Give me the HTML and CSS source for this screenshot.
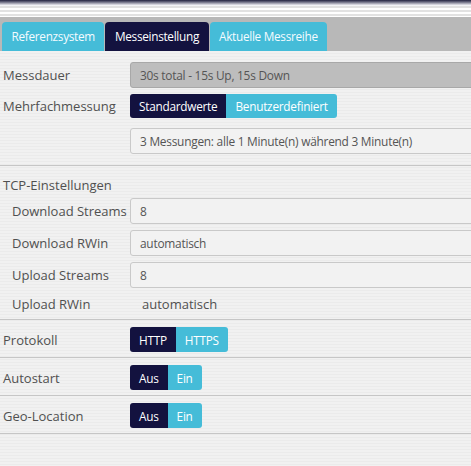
FILE: index.html
```html
<!DOCTYPE html>
<html lang="de">
<head>
<meta charset="utf-8">
<link rel="stylesheet" href="styles.css">
</head>
<body>
<div class="topband"></div>
<div class="tabbar">
  <div class="tab">Referenzsystem</div>
  <div class="tab active">Messeinstellung</div>
  <div class="tab">Aktuelle Messreihe</div>
</div>
<div class="form">
  <div class="row r26 mb6">
    <div class="label">Messdauer</div>
    <div class="field disabled">30s total - 15s Up, 15s Down</div>
  </div>
  <div class="row r24 mb10">
    <div class="label">Mehrfachmessung</div>
    <div class="btngroup">
      <span class="btn dark">Standardwerte</span><span class="btn light">Benutzerdefiniert</span>
    </div>
  </div>
  <div class="row r26">
    <div class="label"></div>
    <div class="field">3 Messungen: alle 1 Minute(n) während 3 Minute(n)</div>
  </div>
  <div class="hr hr-first"></div>
  <div class="heading">TCP-Einstellungen</div>
  <div class="row r26 mb6">
    <div class="label sub">Download Streams</div>
    <div class="field">8</div>
  </div>
  <div class="row r26 mb6">
    <div class="label sub">Download RWin</div>
    <div class="field">automatisch</div>
  </div>
  <div class="row r26 mb6">
    <div class="label sub">Upload Streams</div>
    <div class="field">8</div>
  </div>
  <div class="row r20">
    <div class="label sub">Upload RWin</div>
    <div class="static">automatisch</div>
  </div>
  <div class="hr hr-rwin"></div>
  <div class="section">
    <div class="row r25">
      <div class="label">Protokoll</div>
      <div class="btngroup">
        <span class="btn dark">HTTP</span><span class="btn light">HTTPS</span>
      </div>
    </div>
  </div>
  <div class="hr"></div>
  <div class="section">
    <div class="row r25">
      <div class="label">Autostart</div>
      <div class="btngroup">
        <span class="btn dark">Aus</span><span class="btn light">Ein</span>
      </div>
    </div>
  </div>
  <div class="hr"></div>
  <div class="section">
    <div class="row r25">
      <div class="label">Geo-Location</div>
      <div class="btngroup">
        <span class="btn dark">Aus</span><span class="btn light">Ein</span>
      </div>
    </div>
  </div>
  <div class="hr"></div>
</div>
</body>
</html>
```

FILE: styles.css
```css
html, body {
  margin: 0;
  padding: 0;
  overflow: hidden;
}
body {
  width: 471px;
  height: 466px;
  font-family: "Open Sans", "Noto Sans", sans-serif;
  font-size: 11.9px;
  letter-spacing: -0.25px;
  color: #505050;
  background-color: #efefef;
  background-image: repeating-linear-gradient(to bottom, #f1f1f1 0, #f1f1f1 2px, #ebebeb 2px, #ebebeb 3px);
}
.topband {
  height: 17px;
  background:
    linear-gradient(to bottom, #23233f 0, #6a6a80 2px, #e8e8ee 5px, rgba(255,255,255,0) 6px),
    repeating-linear-gradient(to bottom, #ffffff 0, #ffffff 2px, #e2e2e2 2px, #e2e2e2 4px),
    #ffffff;
}
.tabbar {
  height: 30px;
  padding: 4px 0 0 2px;
  background: #b8b8b8;
  display: flex;
  align-items: flex-end;
}
.tab {
  height: 29px;
  line-height: 29px;
  padding: 0 9.5px;
  margin-right: 1px;
  background: #45bcd8;
  color: #f4fbff;
  border-radius: 4px 4px 0 0;
  font-size: 11.8px;
  letter-spacing: -0.3px;
}
.tab.active {
  background: #13123f;
  color: #ffffff;
}
.form {
  padding-top: 11px;
}
.row {
  display: flex;
  align-items: center;
}
.r26 { height: 26px; }
.r24 { height: 24px; }
.r25 { height: 25px; }
.r20 { height: 20px; }
.mb6 { margin-bottom: 6px; }
.mb10 { margin-bottom: 10px; }
.label {
  width: 127px;
  padding-left: 3px;
  flex: none;
  font-size: 13px;
  letter-spacing: 0;
}
.label.sub {
  width: 118px;
  padding-left: 12px;
}
.field {
  flex: 1;
  height: 24px;
  line-height: 24px;
  margin-right: -6px;
  padding: 0 9px;
  border: 1px solid #c9c9c9;
  border-radius: 3px;
  background: #f2f2f2;
  color: #555555;
}
.field.disabled {
  background: #bdbdbd;
  border-color: #a8a8a8;
}
.static {
  padding-left: 12px;
  font-size: 13px;
  letter-spacing: 0;
}
.btngroup {
  display: flex;
  height: 100%;
  border-radius: 3px;
  overflow: hidden;
  font-size: 11.8px;
}
.btn {
  display: flex;
  align-items: center;
  padding: 0 9px;
  color: #ffffff;
}
.btn.dark { background: #13123f; }
.btn.light { background: #45bcd8; }
.hr {
  height: 1px;
  background: #c6c6c6;
}
.hr-first { margin-top: 11px; }
.hr-rwin { margin-top: 5px; }
.heading {
  margin: 9px 0 3px;
  height: 20px;
  line-height: 20px;
  padding-left: 3px;
  font-size: 13px;
  letter-spacing: 0;
}
.section {
  padding: 7px 0 5px;
}
```
